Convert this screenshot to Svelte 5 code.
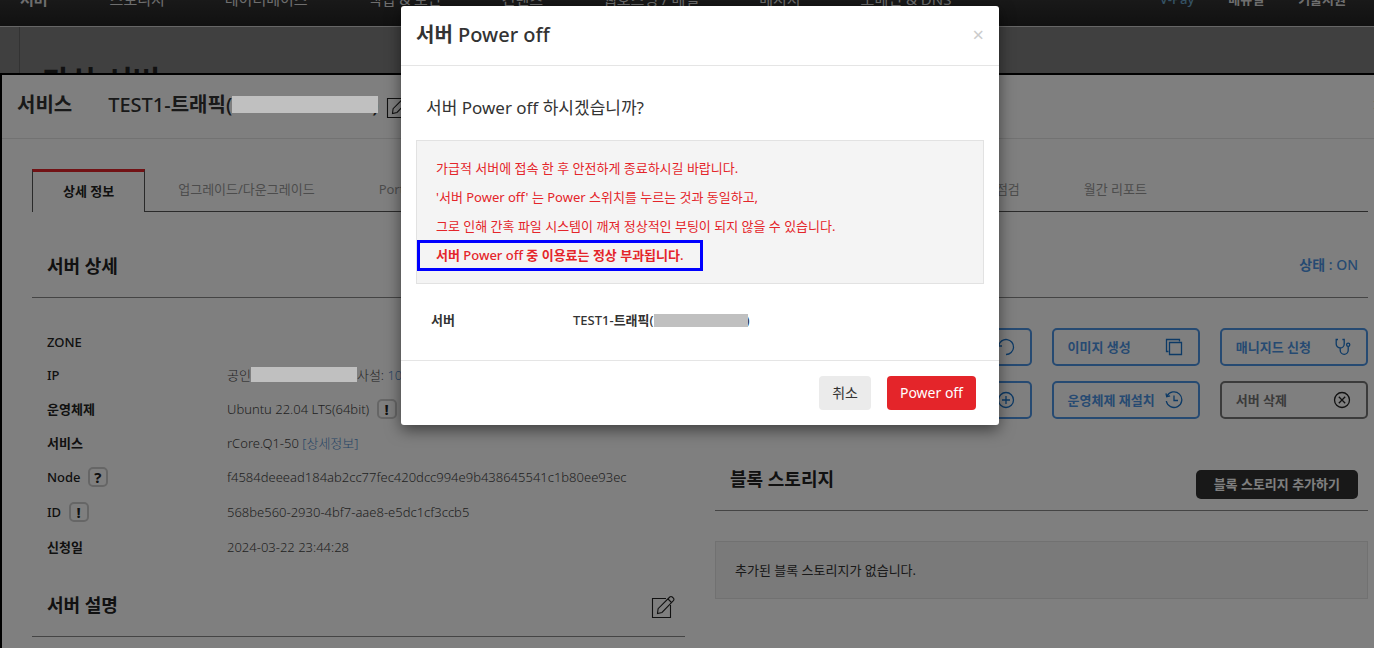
<script lang="ts">
  const menu = ['스토리지', '데이터베이스', '백업 & 보안', '컨텐츠', '웹호스팅 / 메일', '메시지', '도메인 & DNS'];

  type Action = { label: string; icon: string; gray?: boolean };

  const actions: Action[] = [
    { label: '콘솔 접속', icon: 'copy' },
    { label: '재부팅', icon: 'restart' },
    { label: '이미지 생성', icon: 'copy' },
    { label: '매니지드 신청', icon: 'care' },
    { label: '서버 정지', icon: 'remove' },
    { label: '서버 추가', icon: 'plus' },
    { label: '운영체제 재설치', icon: 'history' },
    { label: '서버 삭제', icon: 'remove', gray: true },
  ];
</script>

{#snippet editIcon()}
  <svg class="edit-icon" width="24" height="24" viewBox="0 0 24 24" aria-hidden="true">
    <path d="M15 3.5H1.5v19h18V10" />
    <path d="M6.5 18.5l.6-4.8L18.8 2a1.8 1.8 0 0 1 2.400 0l1.200 1.200a1.8 1.8 0 0 1 0 2.400L11 17.500z" />
    <path d="M17 4l3.5 3.5" />
  </svg>
{/snippet}

<div class="viewport">
  <div class="site">
    <nav class="gnb">
      <a class="on" href="#server">서버</a>
      {#each menu as item}
        <a href="#menu">{item}</a>
      {/each}
      <div class="util">
        <a class="pay" href="#pay">V-Pay</a>
        <a href="#manual"><b>매뉴얼</b></a>
        <a href="#support"><b>기술지원</b></a>
      </div>
    </nav>
    <div class="behind"><h1>가상 서버</h1></div>

    <section class="service">
      <header class="service-head">
        <h2>서비스</h2>
        <p class="name">TEST1-<b>트래픽</b>(<span class="mask mask-title"></span>)</p>
        <button class="icon-btn" type="button" aria-label="이름 수정">{@render editIcon()}</button>
        <button class="close" type="button" aria-label="닫기">×</button>
      </header>

      <div class="service-body">
        <div class="tabs">
          <a class="tab active" href="#detail">상세 정보</a>
          <div class="tab-rest">
            <a class="tab" href="#grade">업그레이드/다운그레이드</a>
            <a class="tab" href="#port">Port</a>
            <a class="tab push" href="#check">점검</a>
            <a class="tab" href="#report">월간 리포트</a>
          </div>
        </div>

        <div class="columns">
          <div>
            <div class="section-head"><h3>서버 상세</h3></div>
            <dl class="info">
              <div><dt>ZONE</dt><dd></dd></div>
              <div>
                <dt>IP</dt>
                <dd>공인<span class="mask mask-ip"></span>사설: <a href="#ip">10.0.0.4</a></dd>
              </div>
              <div class="tall">
                <dt><b>운영체제</b></dt>
                <dd>Ubuntu 22.04 LTS(64bit) <button class="tip" type="button">!</button></dd>
              </div>
              <div><dt><b>서비스</b></dt><dd>rCore.Q1-50 <a href="#spec">[상세정보]</a></dd></div>
              <div class="tall">
                <dt>Node <button class="tip" type="button">?</button></dt>
                <dd>f4584deeead184ab2cc77fec420dcc994e9b438645541c1b80ee93ec</dd>
              </div>
              <div class="tall">
                <dt>ID <button class="tip" type="button">!</button></dt>
                <dd>568be560-2930-4bf7-aae8-e5dc1cf3ccb5</dd>
              </div>
              <div class="tall"><dt><b>신청일</b></dt><dd>2024-03-22 23:44:28</dd></div>
            </dl>
            <div class="section-head">
              <h3>서버 설명</h3>
              <button class="icon-btn" type="button" aria-label="설명 수정">{@render editIcon()}</button>
            </div>
          </div>

          <div>
            <div class="section-head"><p class="state"><b>상태</b> : ON</p></div>
            <div class="actions">
              {#each actions as action}
                <button class="action" class:gray={action.gray} type="button">
                  <span>{action.label}</span>
                  <svg width="18" height="18" viewBox="0 0 18 18" aria-hidden="true">
                    {#if action.icon === 'copy'}
                      <path d="M3.5 13.5h-2v-12h13v2" />
                      <path d="M4.5 4.5h12v12h-12z" />
                    {:else if action.icon === 'restart'}
                      <path d="M1.7 7.5A7.5 7.5 0 1 1 9 16.5M1 4v4h4" />
                    {:else if action.icon === 'care'}
                      <path d="M5 1.5H3.2V6a4 4 0 0 0 8 0V1.5H9.4M7.2 10v2.3a4 4 0 0 0 8 0V8.4" />
                      <circle cx="15.2" cy="6.8" r="1.6" />
                    {:else if action.icon === 'plus'}
                      <circle cx="9" cy="9" r="7.5" />
                      <path d="M9 5v8M5 9h8" />
                    {:else if action.icon === 'history'}
                      <path d="M2 5.2A7.8 7.8 0 1 1 1.3 10M1 2.4l.7 3.4 3.4-.9M9 4.5v5h4" />
                    {:else}
                      <circle cx="9" cy="9" r="7.5" />
                      <path d="M5.8 5.8l6.4 6.4M12.2 5.8l-6.4 6.4" />
                    {/if}
                  </svg>
                </button>
              {/each}
            </div>

            <div class="section-head">
              <h3>블록 스토리지</h3>
              <button class="add" type="button">블록 스토리지 추가하기</button>
            </div>
            <p class="empty">추가된 블록 스토리지가 없습니다.</p>
          </div>
        </div>
      </div>
    </section>

    <div class="backdrop"></div>

    <div class="dialog-wrap">
      <div class="dialog" role="dialog" aria-modal="true" aria-labelledby="dialog-title">
        <header class="dialog-head">
          <h2 id="dialog-title"><b>서버</b> Power off</h2>
          <button class="close" type="button" aria-label="닫기">×</button>
        </header>
        <div class="dialog-body">
          <p class="question">서버 Power off 하시겠습니까?</p>
          <div class="notice">
            <p>가급적 서버에 접속 한 후 안전하게 종료하시길 바랍니다.</p>
            <p>'서버 Power off' 는 Power 스위치를 누르는 것과 동일하고,</p>
            <p>그로 인해 간혹 파일 시스템이 깨져 정상적인 부팅이 되지 않을 수 있습니다.</p>
            <p class="marked"><b>서버</b> Power off <b>중 이용료는 정상 부과됩니다</b>.</p>
          </div>
          <dl class="target">
            <dt><b>서버</b></dt>
            <dd>TEST1-<b>트래픽</b>(<span class="mask mask-target"></span>)</dd>
          </dl>
        </div>
        <footer class="dialog-foot">
          <button class="btn" type="button">취소</button>
          <button class="btn danger" type="button">Power off</button>
        </footer>
      </div>
    </div>
  </div>
</div>

<style>
  :global(body) {
    background: #808080;
  }
  .viewport {
    position: relative;
    height: 100vh;
    overflow: hidden;
    font-family: 'Noto Sans', 'Noto Sans CJK KR', sans-serif;
    font-size: 13px;
    line-height: 20px;
    color: #333;
  }
  /* The page is a little wider than the window. */
  .site {
    width: calc(100% + 26px);
  }
  h1,
  h2,
  h3,
  p,
  dl,
  dd {
    margin: 0;
  }
  /* Hangul has no medium cut, so it goes bold next to medium latin. */
  b {
    font-weight: 700;
  }
  a {
    text-decoration: none;
  }
  button {
    font-family: inherit;
    cursor: pointer;
  }

  /* top menu */
  .gnb {
    display: flex;
    align-items: center;
    gap: 60px;
    height: 54px;
    margin-top: -28px;
    padding: 0 54px 0 20px;
    background: linear-gradient(#444, #222);
    border-bottom: 1px solid #ccc;
    font-size: 15px;
  }
  .gnb a {
    color: #ddd;
  }
  .gnb .on {
    margin-right: 2px;
    font-weight: 700;
  }
  .util {
    display: flex;
    gap: 34px;
    margin-left: auto;
    font-size: 13px;
    font-weight: 500;
  }
  .gnb .pay {
    color: #6aa5c8;
  }
  .behind {
    height: 600px;
    margin-left: 19px;
    padding: 30px 22px;
    border-left: 1px solid #666;
    box-shadow: -20px 0 #808080;
    background: #808080;
  }
  .behind h1 {
    font-size: 30px;
    line-height: 48px;
    color: #222;
  }

  /* service window */
  .service {
    position: absolute;
    top: 73px;
    left: 0;
    box-sizing: border-box;
    width: calc(100% + 26px);
    min-height: 700px;
    background: #fff;
    border: 2px solid #000;
  }
  .service-head {
    display: flex;
    align-items: center;
    height: 59px;
    padding: 0 14px 4px 15px;
    border-bottom: 1px solid #e5e5e5;
    font-size: 20px;
    font-weight: 500;
    line-height: 28px;
  }
  .service-head h2 {
    margin-right: 36px;
    font-size: 20px;
    font-weight: 700;
  }
  .name {
    display: flex;
    align-items: center;
    margin-right: 8px;
  }
  .close {
    margin-left: auto;
    padding: 0;
    background: none;
    border: 0;
    font-size: 20px;
    line-height: 20px;
    color: #ccc;
  }
  .service-head .close {
    color: #777;
  }
  .icon-btn {
    display: flex;
    margin-top: 4px;
    padding: 0;
    background: none;
    border: 0;
  }
  .edit-icon {
    fill: none;
    stroke: #222;
    stroke-width: 1.1;
  }
  .mask {
    display: inline-block;
    position: relative;
    z-index: 11;
    background: #c0c0c0;
    vertical-align: middle;
  }
  .mask-title {
    width: 146px;
    height: 17px;
    margin-right: -6px;
  }
  .mask-ip {
    width: 106px;
    height: 15px;
  }
  .mask-target {
    width: 94px;
    height: 13px;
    margin-right: -2px;
  }
  .service-body {
    padding: 30px;
  }

  .tabs {
    display: flex;
    height: 43px;
  }
  .tab {
    padding: 10px 32px;
    color: #999;
  }
  .active {
    padding: 9px 30px;
    border: 1px solid #555;
    border-top: 3px solid #e4252a;
    border-bottom: 0;
    font-weight: 700;
    color: #222;
  }
  .tab-rest {
    display: flex;
    flex: 1;
    padding: 0 189px 0 1px;
    border-bottom: 1px solid #555;
  }
  .push {
    margin-left: auto;
  }

  .columns {
    display: grid;
    grid-template-columns: 1fr 1fr;
    gap: 30px;
    margin-top: 24px;
  }
  .section-head {
    display: flex;
    align-items: center;
    justify-content: space-between;
    height: 59px;
    padding: 0 10px 2px 15px;
    border-bottom: 1px solid #888;
  }
  .section-head h3 {
    font-size: 18px;
    font-weight: 700;
    line-height: 26px;
    color: #222;
  }
  .state {
    margin: 0 0 2px auto;
    font-size: 14px;
    font-weight: 500;
    color: #4d94e4;
  }

  .info {
    padding: 27px 15px 11px;
  }
  .info > div {
    display: grid;
    grid-template-columns: 180px 1fr;
    align-items: center;
    height: 33px;
  }
  .info > .tall {
    height: 35px;
  }
  .info dt,
  .info dd {
    display: flex;
    align-items: center;
    white-space: pre;
  }
  .info dt {
    font-weight: 500;
    color: #222;
  }
  .info dd {
    font-weight: 300;
    color: #444;
  }
  .info a {
    color: #4f8bcc;
  }
  .tip {
    box-sizing: border-box;
    width: 20px;
    height: 20px;
    margin-left: 4px;
    padding: 0;
    background: none;
    border: 2px solid #ccc;
    border-radius: 5px;
    font-size: 15px;
    font-weight: 700;
    line-height: 16px;
    color: #222;
  }

  .actions {
    display: grid;
    grid-template-columns: repeat(4, 1fr);
    gap: 15px 20px;
    margin: 30px 0;
  }
  .action {
    display: flex;
    align-items: center;
    justify-content: space-between;
    height: 38px;
    padding: 0 15px 0 14px;
    background: none;
    border: 2px solid #4d94e4;
    border-radius: 5px;
    font-size: 13px;
    font-weight: 700;
    color: #4d94e4;
    white-space: nowrap;
  }
  .action span {
    padding-bottom: 2px;
  }
  .action svg {
    fill: none;
    stroke: #1a74cc;
    stroke-width: 1.3;
  }
  .gray {
    border-color: #777;
    color: #777;
  }
  .gray svg {
    stroke: #222;
  }
  .add {
    height: 29px;
    margin-top: 11px;
    padding: 0 18px 2px;
    background: #303030;
    border: 0;
    border-radius: 5px;
    font-size: 13px;
    font-weight: 700;
    color: #fff;
  }
  .empty {
    margin-top: 30px;
    padding: 18px 19px;
    background: #f4f4f4;
    border: 1px solid #e2e2e2;
  }

  /* confirm dialog */
  .backdrop {
    position: absolute;
    inset: 0;
    z-index: 10;
    background: rgba(0, 0, 0, 0.5);
  }
  .dialog-wrap {
    position: absolute;
    top: 6px;
    left: 0;
    z-index: 12;
    width: calc(100% + 26px);
  }
  .dialog {
    width: 598px;
    margin: 0 auto;
    background: #fff;
    border-radius: 3px;
    box-shadow: 0 5px 15px rgba(0, 0, 0, 0.5);
  }
  .dialog-head {
    display: flex;
    align-items: center;
    height: 57px;
    padding: 0 15px 2px;
    border-bottom: 1px solid #e5e5e5;
  }
  .dialog-head h2 {
    font-size: 20px;
    font-weight: 500;
    line-height: 28px;
  }
  .dialog-body {
    padding: 29px 15px 30px;
  }
  .question {
    padding: 0 10px;
    font-size: 17px;
    line-height: 26px;
  }
  .notice {
    margin-top: 19px;
    padding: 13px 19px;
    background: #f4f4f4;
    border: 1px solid #e2e2e2;
    line-height: 29px;
    color: #e4252a;
  }
  .marked {
    width: fit-content;
    margin-left: -18px;
    padding: 0 18px;
    outline: 3px solid #00f;
    outline-offset: -2px;
    font-weight: 500;
  }
  .target {
    display: grid;
    grid-template-columns: 142px 1fr;
    margin-top: 26px;
    padding: 0 15px;
    font-weight: 500;
  }
  .target dd {
    display: flex;
    align-items: center;
  }
  .dialog-foot {
    display: flex;
    justify-content: flex-end;
    gap: 16px;
    padding: 15px 23px;
    border-top: 1px solid #e5e5e5;
  }
  .btn {
    height: 34px;
    padding: 0 13px 2px;
    background: #ebebeb;
    border: 0;
    border-radius: 4px;
    font-size: 14px;
    color: #333;
  }
  .danger {
    background: #e4252a;
    color: #fff;
  }
</style>
